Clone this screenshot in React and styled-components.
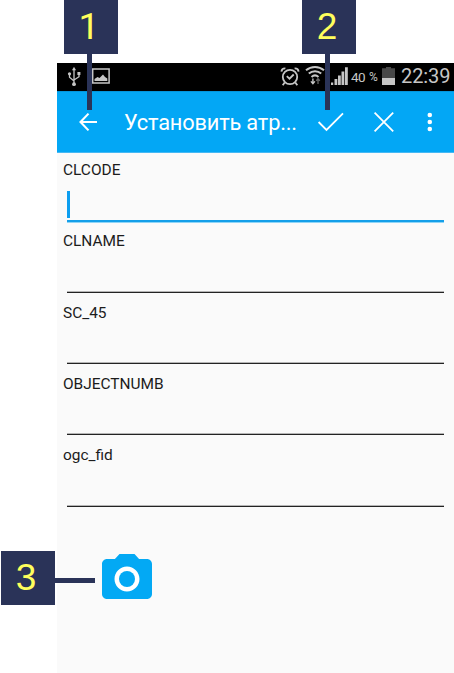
import React from "react";
import styled, { createGlobalStyle } from "styled-components";

const GlobalStyle = createGlobalStyle`
  * { box-sizing: border-box; }
  body { margin: 0; background: #fff; font-family: Roboto, sans-serif; }
`;

const Page = styled.main`
  position: relative;
  width: 454px;
  height: 673px;
  padding: 63px 0 0 57px;
  overflow: hidden;
`;

const Phone = styled.section`
  display: flex;
  flex-direction: column;
  height: 610px;
  background: #fafafa;
`;

const StatusBar = styled.div`
  display: flex;
  height: 28px;
  background: #000;
  color: #c6c6c6;
`;

const Icon = styled.svg`
  display: block;
  flex: none;
  overflow: visible;
  margin-left: ${(p) => p.$left || 0}px;
`;

const Percent = styled.span`
  display: flex;
  gap: 4px;
  width: 31px;
  margin-left: 3px;
  font-size: 13.5px;
  line-height: 28px;
  letter-spacing: -0.6px;
  white-space: nowrap;
  small { font-size: 12px; }
`;

const Clock = styled.span`
  margin-left: 6px;
  font-size: 20px;
  line-height: 27px;
  letter-spacing: -0.1px;
  white-space: nowrap;
`;

const AppBar = styled.header`
  display: flex;
  height: 62px;
  background: #03a7f5;
  border-top: 1px solid #0395dc;
  border-bottom: 1px solid #45b8f4;
  color: #fff;
`;

const Title = styled.h1`
  width: 180px;
  margin: 0 0 0 27px;
  font-size: 21.8px;
  font-weight: 400;
  line-height: 62px;
  letter-spacing: -0.18px;
  white-space: nowrap;
`;

const Form = styled.form`
  display: flex;
  flex-direction: column;
  padding-top: 7px;
`;

const Field = styled.label`
  display: flex;
  flex-direction: column;
  height: 71.3px;
  padding: 0 10px 0 6px;
  color: #1c1c1c;
  font-size: 15.45px;
  line-height: 21px;
`;

const Input = styled.div`
  display: flex;
  align-items: flex-end;
  height: ${(p) => (p.$focused ? 41 : 40.5)}px;
  margin-left: 4px;
  padding-bottom: 2px;
  border-bottom: ${(p) => (p.$focused ? "2px solid #149fe9" : "1.5px solid #222")};
  box-shadow: ${(p) => (p.$focused ? "0 1px #8fd5f7" : "inset 0 -1px #b5b5b5")};
`;

const Caret = styled.i`
  width: 3px;
  height: 27px;
  background: #0c9ef0;
`;

const CameraButton = styled.button`
  width: 60px;
  height: 60px;
  margin: 32.6px 0 0 40px;
  padding: 0;
  border: 0;
  background: none;
  color: #03a9f4;
`;

const Callout = styled.div`
  position: absolute;
  left: ${(p) => p.$x}px;
  top: ${(p) => p.$y}px;
  display: flex;
  flex-direction: ${(p) => (p.$side ? "row" : "column")};
  align-items: center;
`;

const Badge = styled.span`
  width: 54px;
  height: 54px;
  padding-right: 4px;
  background: #2a3358;
  color: #ffff5c;
  font-family: ${(p) => (p.$slim ? "Roboto" : '"Liberation Sans", Arial')}, sans-serif;
  font-size: 37px;
  line-height: 53px;
  text-align: center;
`;

const Leader = styled.i`
  width: ${(p) => (p.$side ? 40 : 5)}px;
  height: ${(p) => (p.$side ? 5 : 56)}px;
  margin: ${(p) => (p.$side ? "5px 0 0" : "0 0 0 -3px")};
  background: #2a3358;
`;

const fields = ["CLCODE", "CLNAME", "SC_45", "OBJECTNUMB", "ogc_fid"];
const callouts = [
  { n: 1, x: 64, y: 0, slim: true },
  { n: 2, x: 302, y: 0 },
  { n: 3, x: 1, y: 551, side: true },
];

const UsbIcon = () => (
  <Icon $left={10} width="14" height="28" viewBox="0 0 14 28" fill="none" stroke="currentColor" strokeWidth="1.3">
    <path d="M7 7v14M2.5 11v3.2L7 18M12 11v2.7L7 17" />
    <path d="M7 3.7 9 7.2H5z" fill="currentColor" stroke="none" />
    <circle cx="7" cy="21.2" r="1.9" fill="currentColor" stroke="none" />
    <circle cx="2.5" cy="10.8" r="1.6" fill="currentColor" stroke="none" />
    <path d="M10.4 9h3v3h-3z" fill="currentColor" stroke="none" />
  </Icon>
);

const PictureIcon = () => (
  <Icon $left={10} width="19" height="28" viewBox="0 0 19 28">
    <path d="M1.7 6.1h16.4v13.8H1.7z" fill="none" stroke="currentColor" strokeWidth="1.5" />
    <path d="M3.5 18v-2l3-2 2 1 3.5-3.5 2 2.5 2.3 1.5V18z" fill="currentColor" />
  </Icon>
);

const AlarmIcon = () => (
  <Icon $left={170} width="20" height="28" viewBox="0 0 20 28" fill="none" stroke="currentColor" strokeWidth="1.8">
    <circle cx="10" cy="14" r="7.2" />
    <path d="m6.8 13.2 2.7 2.5 4.2-4.2M1.4 8.6C1.6 6.5 3 5.2 5.4 5.3M18.6 8.6c-.2-2.1-1.6-3.4-4-3.3M4.7 19.5l-2 2.8M15.3 19.5l2 2.8" />
  </Icon>
);

const WifiIcon = () => (
  <Icon $left={5} width="20" height="28" viewBox="0 0 20 28" fill="none" stroke="currentColor" strokeWidth="2">
    <path d="M1 7.3c5.2-4.4 12.8-4.4 18 0M3.8 10.6c3.6-3.2 8.8-3.2 12.4 0M6.5 13.9c2.1-1.8 4.9-1.8 7 0" />
    <path d="M7.9 15.5v4.5M5.9 18.4l2 2.2 2-2.2" strokeWidth="1.4" />
    <path d="M13 21v-5M11.2 17.8l1.8-2 1.8 2" stroke="#666" strokeWidth="1.3" />
  </Icon>
);

const SignalIcon = () => (
  <Icon $left={6} width="17" height="28" viewBox="0 0 17 28" fill="currentColor">
    <path d="M0 19.5h2.2V22H0zM3.5 16h2.8v6H3.5zM7 12.5h2.8V22H7zM10.5 8.5h2.8V22h-2.8zM14 4.3h2.8V22H14z" />
  </Icon>
);

const BatteryIcon = () => (
  <Icon width="13" height="28" viewBox="0 0 13 28">
    <path d="M4 4h5v1.2h4V15H0V5.2h4z" fill="#484848" />
    <path d="M0 15h13v7H0z" fill="currentColor" />
  </Icon>
);

export default function App() {
  return (
    <>
      <GlobalStyle />
      <Page>
        <Phone>
          <StatusBar>
            <UsbIcon />
            <PictureIcon />
            <AlarmIcon />
            <WifiIcon />
            <SignalIcon />
            <Percent>40<small>%</small></Percent>
            <BatteryIcon />
            <Clock>22:39</Clock>
          </StatusBar>
          <AppBar>
            <Icon $left={22} width="18" height="60" viewBox="0 0 18 60" fill="none" stroke="currentColor" strokeWidth="2.1">
              <path d="M9.5 21.6 1.5 30l8 8.4M1.5 30H18" />
            </Icon>
            <Title>Установить атр...</Title>
            <Icon $left={14} width="26" height="60" viewBox="0 0 26 60" fill="none" stroke="currentColor" strokeWidth="1.8">
              <path d="m.6 30 7.9 8L25 21.3" />
            </Icon>
            <Icon $left={29.5} width="20" height="60" viewBox="0 0 20 60" fill="none" stroke="currentColor" strokeWidth="1.8">
              <path d="m.6 20.7 18.6 18.6m0-18.6L.6 39.3" />
            </Icon>
            <Icon $left={33.5} width="6" height="60" viewBox="0 0 6 60" fill="currentColor">
              <circle cx="2.8" cy="23" r="2.3" />
              <circle cx="2.8" cy="30" r="2.3" />
              <circle cx="2.8" cy="37" r="2.3" />
            </Icon>
          </AppBar>
          <Form>
            {fields.map((name, i) => (
              <Field key={name}>
                {name}
                <Input $focused={i === 0}>{i === 0 && <Caret />}</Input>
              </Field>
            ))}
          </Form>
          <CameraButton aria-label="Camera" type="button">
            <Icon width="60" height="60" viewBox="0 0 24 24" fill="currentColor">
              <circle cx="12" cy="12" r="5.3" fill="#fff" />
              <circle cx="12" cy="12" r="3.2" />
              <path d="M9 2 7.17 4H4c-1.1 0-2 .9-2 2v12c0 1.1.9 2 2 2h16c1.1 0 2-.9 2-2V6c0-1.1-.9-2-2-2h-3.17L15 2H9zm3 15c-2.76 0-5-2.24-5-5s2.24-5 5-5 5 2.24 5 5-2.24 5-5 5z" />
            </Icon>
          </CameraButton>
        </Phone>
        {callouts.map(({ n, x, y, side, slim }) => (
          <Callout key={n} $x={x} $y={y} $side={side}>
            <Badge $slim={slim}>{n}</Badge>
            <Leader $side={side} />
          </Callout>
        ))}
      </Page>
    </>
  );
}
